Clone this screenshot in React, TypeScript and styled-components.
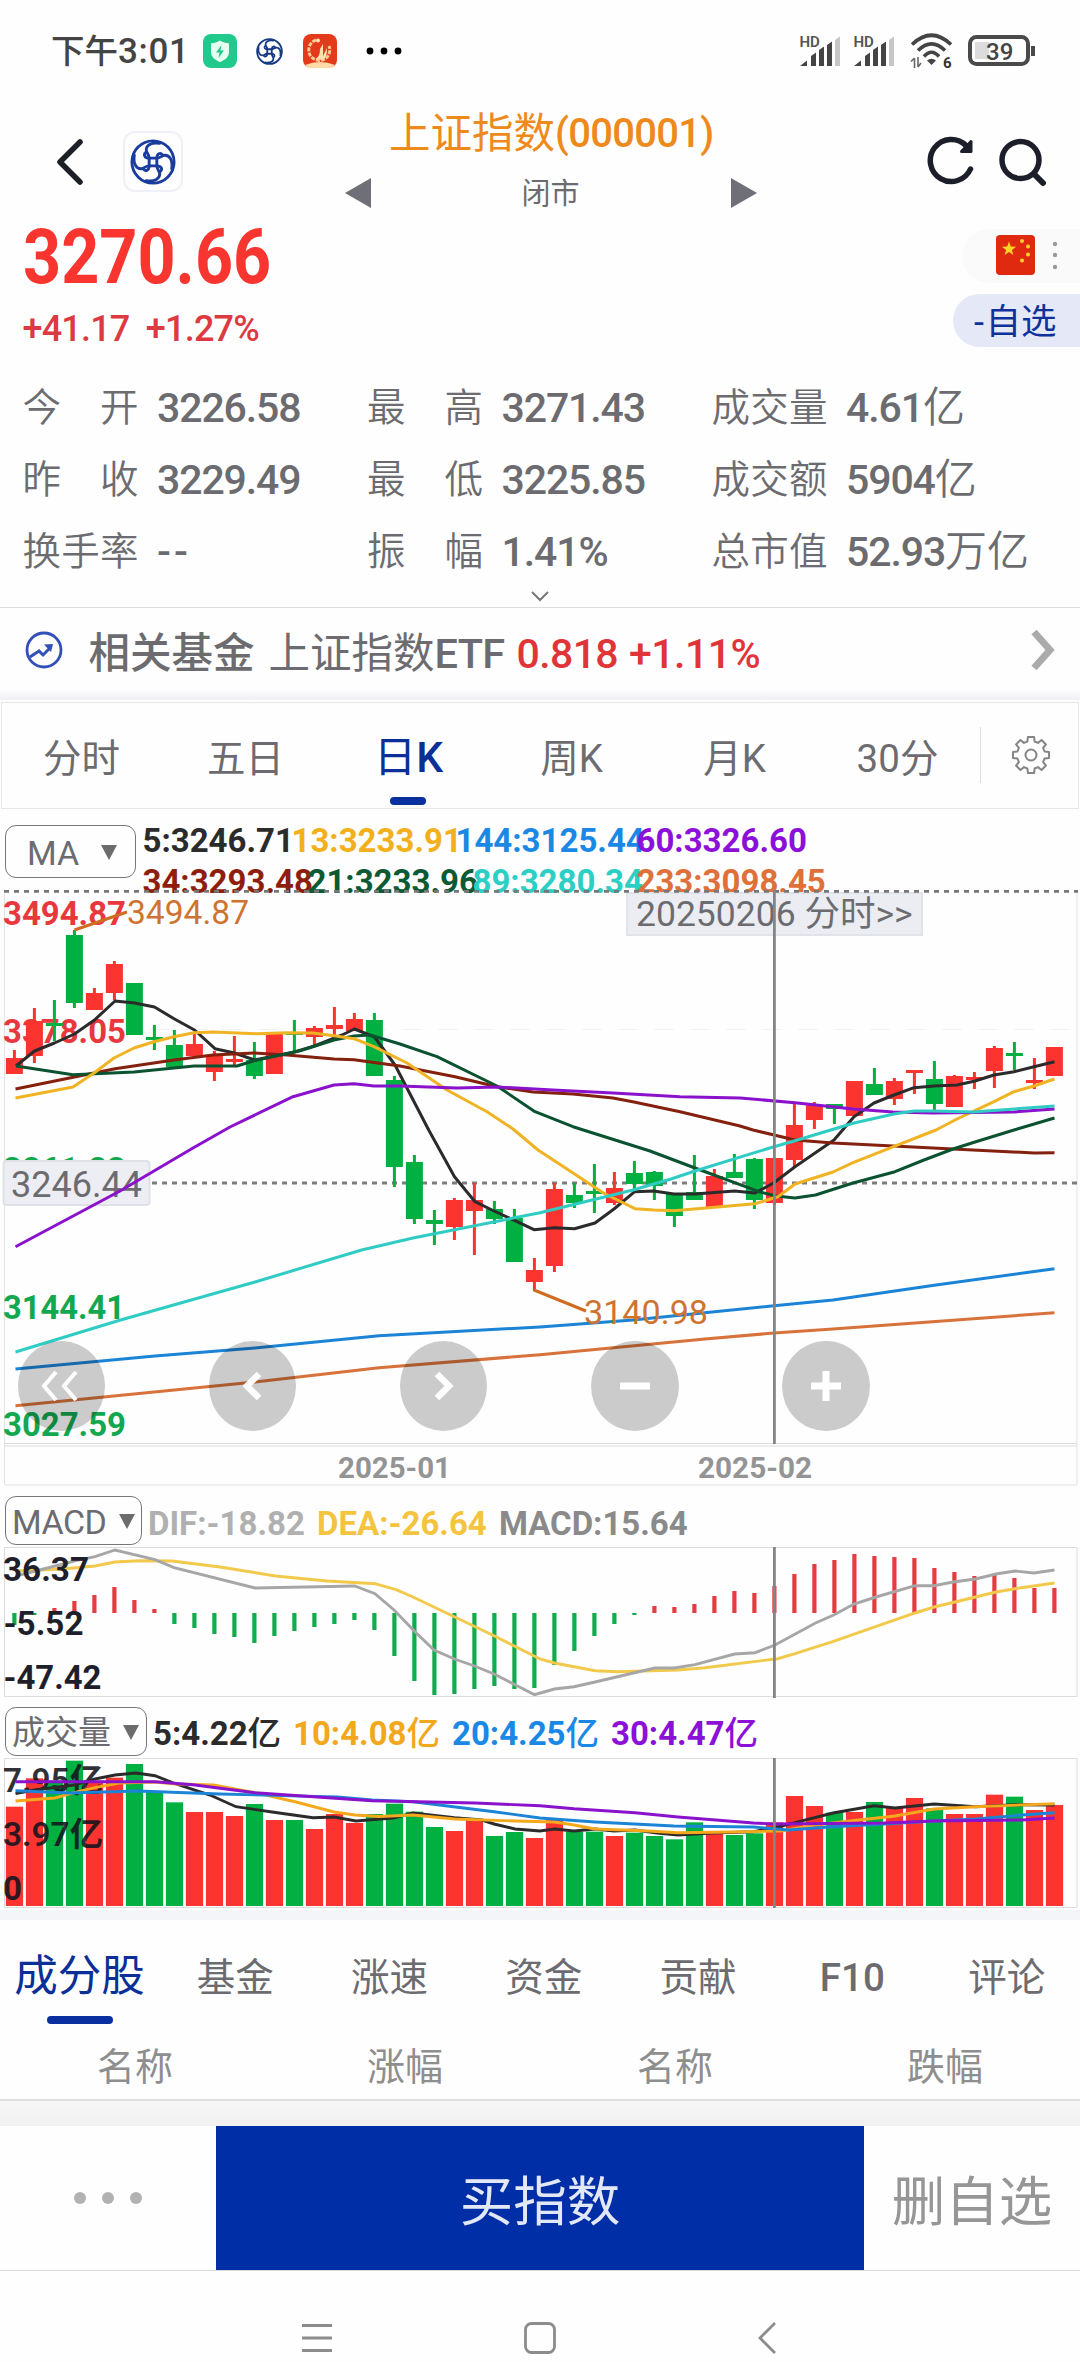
import React from 'react';
import styled, { createGlobalStyle } from 'styled-components';

const RED = '#fb3430';
const GREEN = '#00b142';
const NAVY = '#0a2f96';
const GREY = '#6c6c70';

const Global = createGlobalStyle`
  html, body { margin: 0; padding: 0; background: #fefefe; }
  * { box-sizing: border-box; }
  body { font-family: Roboto, "Noto Sans CJK SC", sans-serif; color: ${GREY}; }
  button { border: 0; background: none; padding: 0; font: inherit; color: inherit; }
  svg { display: block; flex: none; }
`;

const Screen = styled.main`
  width: 1080px; height: 2362px; overflow: hidden; background: #fefefe;
  display: flex; flex-direction: column;
`;

/* ---------- text ---------- */
const Text = styled.span<{ $size: number; $w?: number; $color?: string; $ls?: number; $ml?: number }>`
  font-size: ${p => p.$size}px;
  font-weight: ${p => p.$w ?? 400};
  color: ${p => p.$color ?? 'inherit'};
  letter-spacing: ${p => p.$ls ?? 0}px;
  margin-left: ${p => p.$ml ?? 0}px;
  line-height: 1;
  white-space: nowrap;
`;
const Squeezed = styled(Text)<{ $sx: number }>`
  display: inline-block;
  transform: scaleX(${p => p.$sx});
  transform-origin: left center;
`;

/* ---------- status bar ---------- */
const StatusBar = styled.header`
  height: 102px; flex: none; display: flex; align-items: center;
  padding: 0 43px 0 51px;
`;
const Clock = styled.div`display: flex; align-items: baseline; width: 152px; color: #444; padding-top: 1px;`;
const StatusIcons = styled.div`display: flex; align-items: center; gap: 19px;`;
const StatusRight = styled.div`display: flex; align-items: center; margin-left: auto;`;
const SignalWrap = styled.div`width: 54px;`;
const WifiWrap = styled.div`width: 58px; margin-left: 3px;`;

const Logo = ({ size, color = '#1a3c9c', weight = 3 }: { size: number; color?: string; weight?: number }) => (
  <svg width={size} height={size} viewBox="0 0 48 48" fill="none" stroke={color} strokeWidth={weight} strokeLinecap="round">
    <circle cx="24" cy="24" r="22" />
    {[0, 90, 180, 270].map(a => (
      <g key={a} transform={`rotate(${a} 24 24)`}>
        <path d="M20 20H28" />
        <path d="M31 4.500C22 3 16.500 7 17 12C17.300 15 20 16 20 20" />
        <path d="M28 20C28 15.500 31.500 13.500 34 16.500" />
      </g>
    ))}
  </svg>
);

const Signal = () => (
  <svg width="42" height="36" viewBox="0 -2 42 36">
    <text x="0.500" y="12" fontSize="15" fontWeight="600" fill="#555" fontFamily="Roboto">HD</text>
    <g fill="#444">
      <path d="M1 31 8 25.500V31z" /><path d="M12 31V21l5-3.500V31z" />
      <path d="M20 31V15l5-3.500V31z" /><path d="M28 31V10l5-3.500V31z" />
      <path d="M36 31V5l5-3.500V31z" fill="#c6c6c6" />
    </g>
  </svg>
);

const Wifi = () => (
  <svg width="48" height="40" viewBox="0 -1 48 40" fill="none" stroke="#444" strokeWidth="3.600">
    <path d="M2 12.500Q21.500-6 41 12.500" /><path d="M8 18.500Q21.500 5 35 18.500" /><path d="M14 24.500Q21.500 16 29 24.500" />
    <path d="m21.500 33-4.500-4.500q4.500-3.500 9 0z" fill="#444" stroke="none" />
    <path d="M4.500 26v10M1 29.500 4.500 26M8 25v10M8 35l3-4" strokeWidth="1.600" stroke="#666" />
    <text x="33" y="35.500" fontSize="15" fontWeight="700" fill="#333" stroke="none" fontFamily="Roboto">6</text>
  </svg>
);

const Battery = () => (
  <svg width="69" height="32" viewBox="0 0 69 32">
    <rect x="2" y="2" width="58" height="27" rx="6.500" fill="none" stroke="#4a4a4a" strokeWidth="4" />
    <rect x="7" y="7" width="14" height="17" fill="#dcdcdc" />
    <path d="M65 11v10" stroke="#4a4a4a" strokeWidth="4" />
    <text x="18" y="24.500" fontSize="24" fontWeight="500" fill="#444" fontFamily="Roboto">39</text>
  </svg>
);
const Emblem = styled.div`margin-left: 19px;`;
const MoreDots = styled.div`margin-left: 24px;`;

/* ---------- title bar ---------- */
const TitleBar = styled.nav`
  height: 116px; flex: none; display: grid; grid-template-columns: 345px 412px 1fr; padding-bottom: 2px;
`;
const TitleLeft = styled.div`display: flex; align-items: center; padding: 5px 0 0 55px; gap: 39px;`;
const LogoTile = styled.div`
  width: 60px; height: 61px; border-radius: 12px; border: 2px solid #f0f0f8; display: grid; place-items: center;
`;
const TitleMid = styled.div`display: flex; flex-direction: column;`;
const TitleName = styled.h1`
  margin: 8px 0 0 44px; height: 48px; display: flex; align-items: center; font-weight: 400; color: #ee8a1c; white-space: nowrap;
`;
const Switcher = styled.div`display: flex; justify-content: space-between; align-items: center; height: 30px; margin-top: 20px;`;
const SessionState = styled.div`padding: 3px 1px 0 0;`;
const TitleRight = styled.div`display: flex; align-items: center; gap: 20px; padding: 4px 0 0 170px;`;

/* ---------- quote ---------- */
const Quote = styled.section`height: 154px; flex: none; display: flex; justify-content: space-between;`;
const PriceBlock = styled.div`padding: 0 0 0 22.500px; display: flex; flex-direction: column;`;
const PriceLine = styled.div`height: 76px; display: flex; align-items: center; padding-top: 2px;`;
const ChangeLine = styled.div`height: 68px; display: flex; align-items: center; color: #dc3a40; padding-top: 2px;`;
const QuoteSide = styled.div`display: flex; flex-direction: column; align-items: flex-end; padding-top: 11px; gap: 11px;`;
const MarketPill = styled.div`
  width: 118px; height: 54px; border-radius: 27px 0 0 27px; background: #fafafb;
  display: flex; align-items: center; padding: 0 0 3px 34px; gap: 16px;
`;
const WatchPill = styled.button`
  width: 127px; height: 53px; border-radius: 27px 0 0 27px; background: #e5e9f7; color: #0f319c;
  display: flex; align-items: center; padding: 5px 0 0 21px;
`;

/* ---------- stats ---------- */
const Stats = styled.dl`
  margin: 0; height: 216px; flex: none; padding: 0 0 0 22.500px;
  display: grid; grid-template-columns: 344.500px 344.500px 1fr; grid-auto-rows: 72px;
`;
const Stat = styled.div`display: flex; align-items: center; gap: 18.500px;`;
const StatLabel = styled.dt`
  width: 116px; display: flex; justify-content: space-between; font-size: 38.500px; line-height: 1; font-weight: 350; padding-top: 1px;
`;
const StatValue = styled.dd<{ $blank?: boolean }>`
  margin: 0; font-size: 41px; line-height: 1; font-weight: 500; white-space: nowrap;
  letter-spacing: ${p => (p.$blank ? 3 : -1.1)}px;
  span { font-weight: 350; font-size: 42px; letter-spacing: 0; }
`;
const Expand = styled.div`
  height: 20px; flex: none; display: flex; justify-content: center; border-bottom: 1px solid #dcdcdc; padding-top: 2px;
`;

/* ---------- fund strip ---------- */
const FundRow = styled.section`height: 81px; flex: none; display: flex; align-items: center; padding: 3px 22px 0 25px;`;
const FundName = styled.div`display: flex; align-items: baseline; margin: 7px 0 0 25.500px;`;
const FundArrow = styled.div`margin-left: auto;`;
const Band = styled.div`height: 13px; flex: none; background: linear-gradient(#fefefe, #eff0f4 80%, #fefefe 85%);`;

/* ---------- period tabs ---------- */
const Periods = styled.section`
  height: 107px; flex: none; margin: 0 1px; border: 1px solid #e6e6e6; display: flex; align-items: center;
`;
const Period = styled.button<{ $on?: boolean }>`
  width: 163px; height: 100%; display: flex; flex-direction: column; align-items: center; padding-top: ${p => (p.$on ? 33 : 34)}px;
  color: ${p => (p.$on ? NAVY : GREY)};
  font-size: ${p => (p.$on ? 42.5 : 38.5)}px; line-height: 44px; font-weight: 400;
  &:first-child { width: 162px; padding-right: 3px; }
  b { font-weight: 500; }
  i { width: 36px; height: 8px; border-radius: 4px; background: #0a2f9f; margin: 17px 2px 0 0; }
`;
const PeriodTools = styled.div`
  height: 56px; flex: 1; border-left: 1px solid #dedede; display: flex; align-items: center; padding-left: 30px; margin: 0 0 2px 1px;
`;

/* ---------- indicator header ---------- */
const IndicatorHead = styled.div<{ $h: number; $pt: number }>`
  height: ${p => p.$h}px; flex: none; padding: ${p => p.$pt}px 0 0 5px; display: flex;
`;
const Picker = styled.button<{ $w: number; $h: number; $pl: number; $pr: number }>`
  width: ${p => p.$w}px; height: ${p => p.$h}px; flex: none; border: 1.500px solid #777; border-radius: 11px;
  padding: 2px ${p => p.$pr}px 0 ${p => p.$pl}px; display: flex; justify-content: space-between; align-items: center;
`;
const MaLegend = styled.div`display: grid; grid-template-rows: 41px 41px; margin: -5px 0 0 6.500px;`;
const MaRow = styled.div`display: flex; align-items: center;`;
const MaItem = styled.span<{ $w: number; $c: string }>`
  width: ${p => p.$w}px; color: ${p => p.$c}; font-size: 33px; font-weight: 700; line-height: 1; white-space: nowrap;
`;
const Legend = styled.div<{ $gap: number; $ml: number }>`
  display: flex; align-items: center; gap: ${p => p.$gap}px; margin-left: ${p => p.$ml}px; height: 54px;
`;
const LegendItem = styled.span<{ $w: number; $c: string }>`
  width: ${p => p.$w}px; color: ${p => p.$c}; font-size: 33px; font-weight: 700; line-height: 1; white-space: nowrap;
  span { font-weight: 500; font-size: 33.500px; }
`;

/* ---------- charts ---------- */
const ChartPanel = styled.section`position: relative; flex: none;`;
const ChartLayer = styled.div`position: relative; z-index: 1;`;
const ChartControls = styled.div`
  position: absolute; z-index: 2; left: 17.500px; top: 451px; display: flex; gap: 103.700px;
`;
const RoundButton = styled.button<{ $nudge?: number }>`
  width: 87.500px; height: 90px; border-radius: 50%; background: rgba(0, 0, 0, 0.2);
  display: grid; place-items: center; padding-right: ${p => p.$nudge ?? 0}px;
`;
const DateTag = styled.button`
  position: absolute; left: 626px; top: 2px; width: 297px; height: 44px; background: #ebedf2;
  border: 2px solid #e0e3e8; padding: 1px 0 0 8px; display: flex; align-items: center;
`;
const Gap = styled.div`height: 10px; flex: none; background: #f4f5f9;`;

type Candle = [number, number, number, number, 0 | 1];
// body top, body bottom, high, low, rising
const candles: Candle[] = [
  [1058, 1074, 1050, 1074, 1], [1021, 1056, 1008, 1063, 1], [1023, 1026, 1000, 1041, 0], [935, 1003, 930, 1008, 0],
  [993, 1010, 988, 1010, 1], [964, 993, 961, 1000, 1], [983, 1035, 983, 1035, 0], [1037, 1040, 1025, 1050, 0],
  [1045, 1067, 1030, 1067, 0], [1044, 1056, 1033, 1056, 1], [1056, 1072, 1051, 1081, 1], [1059, 1062, 1036, 1065, 1],
  [1060, 1076, 1042, 1079, 0], [1033, 1074, 1033, 1074, 1], [1033, 1035, 1020, 1051, 0], [1028, 1037, 1026, 1045, 1],
  [1025, 1029, 1007, 1035, 1], [1019, 1031, 1013, 1031, 1], [1020, 1076, 1013, 1076, 0], [1080, 1167, 1076, 1187, 0],
  [1162, 1219, 1155, 1224, 0], [1220, 1224, 1210, 1245, 0], [1200, 1227, 1198, 1240, 1], [1200, 1211, 1183, 1255, 1],
  [1209, 1219, 1201, 1224, 0], [1218, 1262, 1209, 1262, 0], [1270, 1282, 1258, 1291, 1], [1189, 1266, 1183, 1272, 1],
  [1195, 1203, 1183, 1208, 0], [1191, 1194, 1164, 1213, 0], [1188, 1203, 1172, 1205, 1], [1173, 1184, 1161, 1192, 0],
  [1172, 1186, 1171, 1200, 0], [1194, 1216, 1194, 1227, 0], [1192, 1200, 1155, 1200, 0], [1176, 1207, 1169, 1207, 1],
  [1172, 1178, 1154, 1178, 0], [1159, 1200, 1158, 1209, 0], [1158, 1203, 1158, 1205, 1], [1125, 1160, 1104, 1167, 1],
  [1105, 1120, 1102, 1129, 1], [1104, 1109, 1104, 1124, 0], [1081, 1116, 1081, 1116, 1], [1084, 1095, 1068, 1095, 0],
  [1081, 1099, 1078, 1105, 1], [1070, 1073, 1070, 1094, 1], [1079, 1104, 1061, 1110, 0], [1076, 1107, 1075, 1107, 1],
  [1077, 1080, 1072, 1089, 1], [1048, 1071, 1046, 1088, 1], [1053, 1056, 1042, 1070, 0], [1080, 1083, 1058, 1089, 1],
  [1047, 1076, 1047, 1076, 1],
];

const priceLines: [string, string][] = [
  ['#2b2b2b', '16,1066 34.500,1051 54.500,1043 74.500,1034 94.500,1020 115,1001 134.500,1003 154.500,1007 174.500,1019 194.500,1030 215,1048.700 234.500,1053 254.500,1060 274.500,1056 294.500,1052 314.500,1046 342,1035 354.500,1029 374.500,1037 395,1065 428.700,1130 454.500,1176.700 475,1201.700 494,1211 515,1220.700 534,1229.700 554.500,1227.700 574.500,1228.700 595,1223 614,1209 634.700,1191.700 653.600,1191 674,1194 695,1194 734.500,1191 755,1193 774,1182.700 795,1166.700 834,1140 854,1116.700 874,1103 894,1095 914,1087.700 934,1086 957,1085 975,1081 994,1075 1014,1071.700 1034,1066.700 1054.500,1061.700'],
  ['#84200e', '15.500,1089 115,1068.700 174,1060 213,1055 254,1053 287,1055 334,1059 354,1059.700 400,1066 455,1076.700 497,1086.700 533,1092 573,1094 613,1098 634,1102 680,1111.700 740,1126 753,1130 795,1140 833,1143 953,1149 1034,1153 1054.500,1152.700'],
  ['#0b5230', '16,1066 73,1074.700 134,1072 174,1068 194,1066 237,1066 254,1060.700 300,1050.700 334,1040 354,1036 370,1035 400,1044 437,1056.700 497,1086 535,1111.700 573,1126.700 650,1151 695,1168 759,1191.700 776,1196 795,1198 815.500,1195 853,1183 895,1171.700 924,1160 953,1149 975,1142 1014,1130 1054.500,1118'],
  ['#f0b323', '15.500,1098 73,1087 94,1073 114,1058 134,1048 154,1041.700 174,1036.700 194,1032.700 213,1032 257,1033.700 287,1032.700 313,1033 334,1035.700 354,1038.700 374,1046.700 407,1063 447,1090 487,1111.700 513,1129 538,1150 605,1194 635,1208.700 654,1210 674,1210.700 755,1203.700 778,1196.700 795,1184 833,1172 853,1162.700 891,1147.700 936,1130 957,1119 994,1101.700 1014,1091.700 1034,1086 1054.500,1079'],
  ['#8a12cc', '15.500,1246.700 120,1191 193,1148 230,1127 293,1096.700 334,1085 354,1083.700 374,1086 400,1086 457,1088 497,1087 553,1090 613,1093 680,1096.700 740,1098 795,1102.700 853,1109 893,1112 933,1113 1014,1112 1054.500,1109'],
  ['#30ccc4', '15.500,1352 120.500,1320 255,1282 361.600,1250 413,1238 540,1212.700 633,1190 671,1179 695,1171 774,1146.700 795,1140.700 854,1123 894,1114 914,1111 933,1111 973,1112 1054.500,1106'],
  ['#1b84d6', '15.500,1369 155,1356 255,1348 379,1335.700 540,1327 633,1320 774,1305.700 833,1300 936,1285 1054.500,1268.700'],
  ['#d6723a', '15.500,1405.700 255,1382 379,1367.700 540,1354.700 705,1339 774,1333 833,1329 1054.500,1312.700'],
];

const macdEnds = [
  1625, 1615, 1608, 1601, 1595, 1587, 1600, 1609, 1624, 1628, 1634, 1637, 1643, 1636, 1631, 1627, 1624, 1620, 1630, 1656,
  1681, 1695, 1694, 1689, 1686, 1689, 1688, 1665, 1651, 1636, 1624, 1615, 1606, 1607, 1604, 1596, 1591, 1593, 1586, 1574,
  1564, 1560, 1554, 1556, 1557, 1558, 1568, 1572, 1576, 1575, 1578, 1588, 1588,
];
const difLine = '15.500,1576 39.600,1570 76,1560.700 95,1556.700 115,1550 155,1559.700 174,1567.700 255,1588 354.700,1586 375,1593.700 394,1610 415,1631.700 434,1650 454.500,1659 474.500,1666 494,1674 534.500,1694.700 554.500,1689 574,1686.700 595,1682 654.700,1668 674,1668 695,1664.700 734.600,1654 755,1652.700 775,1645 815.500,1623 833.700,1615 854,1604 876,1597 915,1585.700 934,1585.700 953,1582 975.600,1579 996,1574 1015,1571 1034,1573 1054.500,1570';
const deaLine = '15.500,1571 62,1569 95,1566 115,1562 139.500,1560.700 172,1561 220,1567 275.500,1576 327,1581 375,1583.700 396,1589.700 413,1597 494,1635.700 540,1659 554.500,1663 595,1670.700 617.500,1671.700 678,1670 705,1667.700 777.600,1658.700 795,1653.700 832.700,1641.700 915,1613 934,1607 955,1602 975.600,1597 996,1592 1015,1588.700 1054.500,1583';

const volumes = 'r950 r865 g872 g812 r872 r863 g822 g905 g937 r966 r966 r978 g942 r990 g990 r1017 r972 r999 g972 g941 g965 g1011 r1023 r990 g1038 g1026 r1044 r990 g1025 g1025 r1038 g1028 g1038 g1048 g997 r1030 g1035 g1030 r997 r918 r948 g968 r966 g936 r952 r924 g955 r972 r972 r914 g920 r960 r945'
  .split(' ')
  .map(v => ({ up: v[0] === 'r', top: 1490 + Number(v.slice(1)) / 3 }));
const volumeLines: [string, string][] = [
  ['#2b2b2b', '15.500,1793.700 34.500,1790 74,1785 95,1779 115,1775 136,1773 155,1775.700 176,1784 210,1795 236,1806.700 272,1812 313,1817.700 334,1817 356,1821 393,1818 413,1813 454.500,1817.700 482,1820 494,1824 515,1829 540,1831 554.500,1829 574,1831 595,1829 614,1831 635,1830 657,1833 678,1835 712,1833 753.500,1831.700 774,1828 795,1822.700 833,1813 874,1805.700 895,1808 934,1804 975.600,1806.700 1015,1804.700 1054.500,1805'],
  ['#f5a81c', '15.500,1801 55,1798 74,1792.700 95,1787.700 119,1783 155,1782 176,1784 213.500,1785 255,1792.700 296,1802 334,1812 355,1815 379,1816.500 413,1815 454.500,1819 515,1821 554.500,1822 574,1825 595,1829 643,1830.700 678,1832.700 733,1832 781,1831 815.500,1825 850,1821 895,1816 934,1809 975.600,1806.700 1054.500,1803.700'],
  ['#1b84d6', '15.500,1790.700 69,1793 138,1791 220,1794 337.500,1797 372,1800 413,1801.700 494,1811.700 540,1818 595,1822 674,1826 753.500,1827 788,1830 833,1826.700 884,1824 934,1821 976,1819 1022,1815 1054.500,1812.700'],
  ['#8a12cc', '15.500,1781.700 155,1781.700 193,1784.700 255,1792.700 372,1800.700 475,1803 540,1805.700 574,1808.700 635,1812.700 678,1817 753.500,1823 774,1824 884,1823 934,1821 1022,1820 1054.500,1818'],
];

const barX = (i: number) => 14.4 + i * 20;

const AxisText = ({ x, y, w, color, children, weight = 700, size = 32.5 }: {
  x: number; y: number; w: number; color: string; children: string; weight?: number; size?: number;
}) => (
  <text x={x} y={y} textLength={w} lengthAdjust="spacingAndGlyphs" fill={color} fontSize={size} fontWeight={weight}>{children}</text>
);

const PriceChart = () => (
  <svg width="1080" height="597" viewBox="0 890 1080 597" fill="none">
    <path d="M4.500 893V1485H1077V893" stroke="#e4e4e4" />
    <path d="M4.500 1443.500H1077M4.500 1446H1077" stroke="#dcdcdc" />
    <path d="M6 1029.500H1072" stroke="#f3f3f3" strokeDasharray="20 16" />
    <AxisText x={3} y={925} w={123} color="#e8383e">3494.87</AxisText>
    <AxisText x={3} y={1042.5} w={123} color="#e8383e">3378.05</AxisText>
    <AxisText x={3} y={1181} w={123} color="#12a850">3261.23</AxisText>
    <AxisText x={3} y={1319} w={122} color="#12a850">3144.41</AxisText>
    <AxisText x={3} y={1435.8} w={123} color="#12a850">3027.59</AxisText>
    <rect x="3.500" y="1161" width="146" height="44" rx="3" fill="#eceef3" stroke="#dfe1e6" strokeWidth="2" />
    <AxisText x={11} y={1197} w={131} color="#6c6c70" weight={400} size={36}>3246.44</AxisText>
    <path d="M152 1183H1080" stroke="#7c7c7c" strokeWidth="3" strokeDasharray="5 5" />
    {candles.map(([t, b, h, l, up], i) => (
      <g key={i} fill={up ? RED : GREEN}>
        <rect x={barX(i) - 8.5} y={t} width="17" height={b - t} />
        <rect x={barX(i) - 1.5} y={h} width="3" height={l - h} />
      </g>
    ))}
    {priceLines.map(([c, pts]) => <polyline key={c} points={pts} stroke={c} strokeWidth="3" strokeLinejoin="round" />)}
    <path d="M74.500 930 127 912M534 1290 586 1311" stroke="#cf6c22" strokeWidth="3" />
    <AxisText x={127} y={924} w={122} color="#cf7430" weight={400}>3494.87</AxisText>
    <AxisText x={584} y={1324} w={124} color="#cf7430" weight={400}>3140.98</AxisText>
    <path d="M4 891.200H1078" stroke="#777" strokeWidth="3" strokeDasharray="5 5" />
    <path d="M774.400 890V1444" stroke="#848484" strokeWidth="2.800" />
    <AxisText x={338} y={1478} w={113} color="#949494" weight={700} size={29}>2025-01</AxisText>
    <AxisText x={698} y={1478} w={114} color="#949494" weight={700} size={29}>2025-02</AxisText>
  </svg>
);

const MacdChart = () => (
  <svg width="1080" height="152" viewBox="0 1547 1080 152" fill="none">
    <path d="M4.500 1547.500H1077V1696.500H4.500z" stroke="#dcdcdc" />
    {macdEnds.map((y, i) => (
      <rect key={i} x={barX(i) - 2.1} y={Math.min(y, 1613)} width="4.200" height={Math.abs(y - 1613)} fill={y < 1613 ? '#e43c40' : '#10ab4c'} />
    ))}
    <polyline points={deaLine} stroke="#f2c94a" strokeWidth="2.900" />
    <polyline points={difLine} stroke="#a6a6a6" strokeWidth="2.900" />
    <path d="M774.400 1547V1698" stroke="#848484" strokeWidth="2.800" />
    <AxisText x={3} y={1580.7} w={86} color="#1f1f2c">36.37</AxisText>
    <AxisText x={3.5} y={1634.7} w={80} color="#1f1f2c">-5.52</AxisText>
    <AxisText x={3.5} y={1689} w={98} color="#1f1f2c">-47.42</AxisText>
  </svg>
);

const VolumeChart = () => (
  <svg width="1080" height="152" viewBox="0 1758 1080 152" fill="none">
    <path d="M4.500 1758.500H1077V1907.500H4.500z" stroke="#dcdcdc" />
    {volumes.map((v, i) => (
      <rect key={i} x={barX(i) - 8.5} y={v.top} width="17.200" height={1906 - v.top} fill={v.up ? RED : GREEN} />
    ))}
    <g opacity="0.88">
      <AxisText x={3} y={1792} w={100} color="#14141e" weight={600}>7.95亿</AxisText>
      <AxisText x={3} y={1845.5} w={100} color="#14141e" weight={600}>3.97亿</AxisText>
      <AxisText x={3} y={1899.5} w={19} color="#14141e">0</AxisText>
    </g>
    {volumeLines.map(([c, pts]) => <polyline key={c} points={pts} stroke={c} strokeWidth="2.900" />)}
    <path d="M774.400 1758V1908" stroke="#848484" strokeWidth="2.800" />
  </svg>
);

/* ---------- lower tabs ---------- */
const Sections = styled.nav`height: 112px; flex: none; display: grid; grid-template-columns: 158px repeat(6, 154.300px);`;
const Section = styled.button<{ $on?: boolean; $latin?: boolean }>`
  display: flex; flex-direction: column; align-items: center; padding: ${p => (p.$on ? '34px 0 0 1px' : '34.5px 0 0')};
  font-size: ${p => (p.$on ? 43.5 : 38.5)}px; line-height: 46px; color: ${p => (p.$on ? NAVY : GREY)};
  font-weight: ${p => (p.$latin ? 500 : 400)};
  i { width: 66px; height: 8px; border-radius: 4px; background: #0a2f9f; margin-top: 16px; }
`;
const ListHead = styled.div`
  height: 69px; flex: none; display: grid; grid-template-columns: repeat(4, 1fr); padding-top: 16px;
  justify-items: center; border-bottom: 2px solid #dedede;
`;
const Shade = styled.div`height: 25px; flex: none; background: linear-gradient(#f7f7f7, #f0f0f0);`;
const Actions = styled.footer`height: 145px; flex: none; display: grid; grid-template-columns: 216px 648px 216px; border-bottom: 1.500px solid #d8d8d8;`;
const Action = styled.button<{ $main?: boolean; $pt?: number }>`
  background: ${p => (p.$main ? '#002ea6' : 'transparent')}; color: ${p => (p.$main ? '#e2e8f8' : '#969696')};
  display: grid; place-items: center; font-size: 53.500px; line-height: 1; padding-top: ${p => p.$pt ?? 0}px;
`;
const SystemNav = styled.div`flex: 1; display: flex; align-items: center; padding: 42px 0 0 301px;`;
const NavSlot = styled.div<{ $w: number }>`width: ${p => p.$w}px; flex: none;`;

const Caret = ({ w = 16, h = 15 }: { w?: number; h?: number }) => (
  <svg width={w} height={h} viewBox="0 0 16 15"><path d="M0 0H16L8 15z" fill="#6c6c6c" /></svg>
);

const star = (cx: number, cy: number, r: number) =>
  Array.from({ length: 10 }, (_, k) => {
    const a = (Math.PI / 5) * k - Math.PI / 2;
    const q = k % 2 ? r * 0.4 : r;
    return `${cx + q * Math.cos(a)},${cy + q * Math.sin(a)}`;
  }).join(' ');

const stats: [string, string, string][] = [
  ['今开', '3226.58', ''], ['最高', '3271.43', ''], ['成交量', '4.61', '亿'],
  ['昨收', '3229.49', ''], ['最低', '3225.85', ''], ['成交额', '5904', '亿'],
  ['换手率', '--', ''], ['振幅', '1.41%', ''], ['总市值', '52.93', '万亿'],
];

const gear = (() => {
  const pts: string[] = [];
  for (let k = 0; k < 8; k++) {
    const base = (k * Math.PI) / 4 - Math.PI / 2;
    [[-0.26, 14], [-0.17, 18.3], [0.17, 18.3], [0.26, 14]].forEach(([d, r]) => {
      pts.push(`${20 + r * Math.cos(base + d)},${20 + r * Math.sin(base + d)}`);
    });
  }
  return pts.join(' ');
})();

export default function App() {
  return (
    <Screen>
      <Global />
      <StatusBar>
        <Clock><Text $size={33.5} $w={500}>下午</Text><Text $size={35} $w={500} $ls={0.7}>3:01</Text></Clock>
        <StatusIcons>
          <svg width="34" height="34" viewBox="0 0 34 34">
            <rect width="34" height="34" rx="8" fill="#22c98c" />
            <path d="M17 6.500c3 2 5.500 2.500 9 3V18c0 5-4 8-9 10-5-2-9-5-9-10V9.500c3.500-.5 6-1 9-3z" fill="#e6fff4" />
            <path d="M18.500 11 13 18.500h3.500L15.500 24l5.500-7.500h-3.500z" fill="#22c98c" />
          </svg>
          <Logo size={27} weight={3.2} color="#173a86" />
        </StatusIcons>
        <Emblem>
          <svg width="36" height="36" viewBox="0 0 36 36">
            <rect x="1" y="1" width="34" height="34" rx="8" fill="#e43a1c" />
            <path d="M14 7a10.500 10.500 0 1 0 13 6" fill="none" stroke="#ffc890" strokeWidth="3" strokeDasharray="4 1.200" />
            <path d="M13 26q5-2 5-10l3-5v12l4-8q0 10-4 12z" fill="#ffe2b0" />
            <circle cx="16" cy="7.500" r="2" fill="#ffe2b0" />
            <path d="M3 32q15-6 30 0l-3 3H6z" fill="#ffd9a8" />
          </svg>
        </Emblem>
        <MoreDots>
          <svg width="46" height="10" viewBox="0 0 46 10">
            <circle cx="8" cy="5" r="3.400" /><circle cx="22" cy="5" r="3.400" /><circle cx="36" cy="5" r="3.400" />
          </svg>
        </MoreDots>
        <StatusRight>
          <SignalWrap><Signal /></SignalWrap>
          <SignalWrap><Signal /></SignalWrap>
          <WifiWrap><Wifi /></WifiWrap>
          <Battery />
        </StatusRight>
      </StatusBar>

      <TitleBar>
        <TitleLeft>
          <svg width="29" height="48" viewBox="0 0 29 48" fill="none" stroke="#1c1f26" strokeWidth="5.500" strokeLinecap="round" strokeLinejoin="round">
            <path d="M25 4 5 24l20 20" />
          </svg>
          <LogoTile><Logo size={46} /></LogoTile>
        </TitleLeft>
        <TitleMid>
          <TitleName>
            <Text $size={41.5}>上证指数</Text>
            <Text $size={40} $w={500} $ls={-0.7}>(000001)</Text>
          </TitleName>
          <Switcher>
            <svg width="26" height="30" viewBox="0 0 26 30"><path d="M26 0V30L0 15z" fill="#6f6f78" /></svg>
            <SessionState><Text $size={29}>闭市</Text></SessionState>
            <svg width="26" height="30" viewBox="0 0 26 30"><path d="M0 0V30L26 15z" fill="#6f6f78" /></svg>
          </Switcher>
        </TitleMid>
        <TitleRight>
          <svg width="50" height="52" viewBox="0 0 50 52" fill="none" stroke="#1c1e2a" strokeWidth="5.500" strokeLinecap="round">
            <path d="M43.500 34A21 21 0 1 1 39 10.500" />
            <path d="M44 6.500V16.500H34.500z" fill="#1c1e2a" strokeWidth="3" strokeLinejoin="round" />
          </svg>
          <svg width="50" height="52" viewBox="0 0 50 52" fill="none" stroke="#1c1e2a" strokeWidth="5.500" strokeLinecap="round">
            <circle cx="23.500" cy="25" r="18.500" /><path d="m38 40 8 8" strokeWidth="6" />
          </svg>
        </TitleRight>
      </TitleBar>

      <Quote>
        <PriceBlock>
          <PriceLine><Squeezed $size={76} $w={700} $color="#f8352f" $sx={0.875}>3270.66</Squeezed></PriceLine>
          <ChangeLine><Text $size={36} $w={500} $ls={-0.8}>+41.17&nbsp;&nbsp;+1.27%</Text></ChangeLine>
        </PriceBlock>
        <QuoteSide>
          <MarketPill>
            <svg width="39" height="40" viewBox="0 0 39 40">
              <rect width="39" height="40" rx="4" fill="#e02a10" />
              <g fill="#ffd428">
                <polygon points={star(13, 14, 7.5)} />
                <circle cx="26" cy="6" r="2" /><circle cx="32" cy="11.500" r="2" /><circle cx="32" cy="19.500" r="2" /><circle cx="26" cy="25.500" r="2" />
              </g>
            </svg>
            <svg width="8" height="32" viewBox="0 0 8 32" fill="#9a9a9a"><circle cx="4" cy="5" r="2.200" /><circle cx="4" cy="16" r="2.200" /><circle cx="4" cy="28" r="2.200" /></svg>
          </MarketPill>
          <WatchPill><Text $size={36}>-</Text><Text $size={35.5} $ml={1.5}>自选</Text></WatchPill>
        </QuoteSide>
      </Quote>

      <Stats>
        {stats.map(([label, value, unit]) => (
          <Stat key={label}>
            <StatLabel>{[...label].map(ch => <span key={ch}>{ch}</span>)}</StatLabel>
            <StatValue $blank={value === '--'}>{value}{unit && <span>{unit}</span>}</StatValue>
          </Stat>
        ))}
      </Stats>
      <Expand>
        <svg width="20" height="12" viewBox="0 0 20 12" fill="none" stroke="#777" strokeWidth="2"><path d="m2 2 8 8 8-8" /></svg>
      </Expand>

      <FundRow>
        <svg width="38" height="38" viewBox="0 0 38 38" fill="none" stroke="#3350b8" strokeWidth="2.800">
          <circle cx="19" cy="19" r="17" />
          <path d="m5 26 9-6 4 4 8-8" strokeWidth="3" /><path d="m19 13.500 9-.5-2 8z" fill="#3350b8" stroke="none" />
        </svg>
        <FundName>
          <Text $size={41.5} $w={500}>相关基金</Text>
          <Text $size={41.5} $ml={14}>上证指数</Text>
          <Text $size={41.5} $w={500} $ls={-0.7}>ETF</Text>
          <Text $size={41} $w={500} $ls={-0.6} $color="#e03438" $ml={12}>0.818</Text>
          <Text $size={41} $w={500} $ls={-0.5} $color="#e03438" $ml={11}>+1.11%</Text>
        </FundName>
        <FundArrow>
          <svg width="28" height="42" viewBox="0 0 28 42" fill="none" stroke="#ababab" strokeWidth="7"><path d="m4 3 16 18L4 39" /></svg>
        </FundArrow>
      </FundRow>
      <Band />

      <Periods>
        {['分时', '五日', '日K', '周K', '月K', '30分'].map(t => (
          <Period key={t} $on={t === '日K'}>
            {t === '日K' ? <><span>日<b>K</b></span><i /></> : t}
          </Period>
        ))}
        <PeriodTools>
          <svg width="40" height="40" viewBox="0 0 40 40" fill="none" stroke="#858585" strokeWidth="2" strokeLinejoin="round">
            <polygon points={gear} /><circle cx="20" cy="20" r="5.500" />
          </svg>
        </PeriodTools>
      </Periods>

      <IndicatorHead $h={81} $pt={16}>
        <Picker $w={131} $h={53} $pl={21} $pr={18}><Text $size={34}>MA</Text><Caret /></Picker>
        <MaLegend>
          <MaRow>
            <MaItem $w={149} $c="#2b2b2b">5:3246.71</MaItem><MaItem $w={164} $c="#f2b01c">13:3233.91</MaItem>
            <MaItem $w={181} $c="#1a88e4">144:3125.44</MaItem><MaItem $w={170} $c="#8c10d8">60:3326.60</MaItem>
          </MaRow>
          <MaRow>
            <MaItem $w={165} $c="#8e1e0c">34:3293.48</MaItem><MaItem $w={165} $c="#0b5a34">21:3233.96</MaItem>
            <MaItem $w={164} $c="#2ccfc4">89:3280.34</MaItem><MaItem $w={190} $c="#e0703a">233:3098.45</MaItem>
          </MaRow>
        </MaLegend>
      </IndicatorHead>
      <ChartPanel>
        <DateTag><Text $size={35.5}>20250206 分时&gt;&gt;</Text></DateTag>
        <ChartLayer><PriceChart /></ChartLayer>
        <ChartControls>
          <RoundButton $nudge={4}><svg width="38" height="30" viewBox="0 0 38 30" fill="none" stroke="#fff" strokeWidth="4"><path d="M16 1 4 15l12 14M36 1 24 15l12 14" /></svg></RoundButton>
          <RoundButton><svg width="22" height="30" viewBox="0 0 22 30" fill="none" stroke="#fff" strokeWidth="6.500"><path d="M18 3 6 15l12 12" /></svg></RoundButton>
          <RoundButton><svg width="22" height="30" viewBox="0 0 22 30" fill="none" stroke="#fff" strokeWidth="6.500"><path d="m4 3 12 12L4 27" /></svg></RoundButton>
          <RoundButton><svg width="30" height="30" viewBox="0 0 30 30" stroke="#fff" strokeWidth="7"><path d="M0 15H30" /></svg></RoundButton>
          <RoundButton><svg width="30" height="30" viewBox="0 0 30 30" stroke="#fff" strokeWidth="7"><path d="M0 15H30M15 0V30" /></svg></RoundButton>
        </ChartControls>
      </ChartPanel>

      <IndicatorHead $h={60} $pt={9}>
        <Picker $w={137} $h={49} $pl={6} $pr={6}><Text $size={34} $ls={-0.5}>MACD</Text><Caret /></Picker>
        <Legend $gap={14} $ml={6}>
          <LegendItem $w={155} $c="#b0b0b0">DIF:-18.82</LegendItem>
          <LegendItem $w={168} $c="#f4c440">DEA:-26.64</LegendItem>
          <LegendItem $w={190} $c="#8a8a8a">MACD:15.64</LegendItem>
        </Legend>
      </IndicatorHead>
      <MacdChart />

      <IndicatorHead $h={59} $pt={8}>
        <Picker $w={142} $h={49} $pl={6} $pr={7}><Text $size={33}>成交量</Text><Caret /></Picker>
        <Legend $gap={14} $ml={6}>
          <LegendItem $w={126} $c="#2b2b2b">5:4.22<span>亿</span></LegendItem>
          <LegendItem $w={145} $c="#f2a81c">10:4.08<span>亿</span></LegendItem>
          <LegendItem $w={145} $c="#1a88e4">20:4.25<span>亿</span></LegendItem>
          <LegendItem $w={145} $c="#8c10d8">30:4.47<span>亿</span></LegendItem>
        </Legend>
      </IndicatorHead>
      <VolumeChart />
      <Gap />

      <Sections>
        {['成分股', '基金', '涨速', '资金', '贡献', 'F10', '评论'].map((t, i) => (
          <Section key={t} $on={i === 0} $latin={t === 'F10'}>{t}{i === 0 && <i />}</Section>
        ))}
      </Sections>
      <ListHead>
        {['名称', '涨幅', '名称', '跌幅'].map((t, i) => <Text key={i} $size={38} $color="#8e8e8e">{t}</Text>)}
      </ListHead>
      <Shade />
      <Actions>
        <Action><svg width="70" height="14" viewBox="0 0 70 14" fill="#b2b2b2"><circle cx="7" cy="7" r="6" /><circle cx="35" cy="7" r="6" /><circle cx="63" cy="7" r="6" /></svg></Action>
        <Action $main $pt={9}>买指数</Action>
        <Action $pt={9}>删自选</Action>
      </Actions>
      <SystemNav>
        <NavSlot $w={223}><svg width="32" height="32" viewBox="0 0 32 32" stroke="#8c8c8c" strokeWidth="2.800"><path d="M1 3.500H31M1 16H31M1 28.500H31" /></svg></NavSlot>
        <NavSlot $w={231}><svg width="32" height="32" viewBox="0 0 32 32" fill="none" stroke="#8c8c8c" strokeWidth="2.800"><rect x="1.500" y="1.500" width="29" height="29" rx="6" /></svg></NavSlot>
        <NavSlot $w={32}><svg width="24" height="32" viewBox="0 0 24 32" fill="none" stroke="#8c8c8c" strokeWidth="2.800"><path d="M20 1 5 16l15 15" /></svg></NavSlot>
      </SystemNav>
    </Screen>
  );
}
